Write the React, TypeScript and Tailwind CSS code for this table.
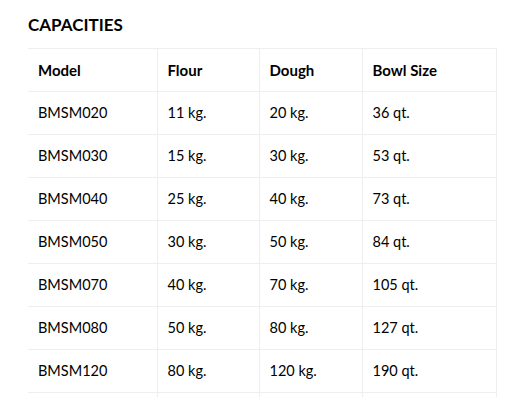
const rows = [
  ['BMSM020', '11 kg.', '20 kg.', '36 qt.'],
  ['BMSM030', '15 kg.', '30 kg.', '53 qt.'],
  ['BMSM040', '25 kg.', '40 kg.', '73 qt.'],
  ['BMSM050', '30 kg.', '50 kg.', '84 qt.'],
  ['BMSM070', '40 kg.', '70 kg.', '105 qt.'],
  ['BMSM080', '50 kg.', '80 kg.', '127 qt.'],
  ['BMSM120', '80 kg.', '120 kg.', '190 qt.'],
];

const widths = ['w-[129px]', 'w-[102px]', 'w-[103px]', 'w-[134px]'];

export default function App() {
  return (
    <div className="min-h-[420px] bg-white pl-[28px] pt-[14px] text-black font-['Lato','Liberation_Sans',sans-serif]">
      <h2 className="text-[17px] font-bold leading-[22px]">CAPACITIES</h2>
      <table className="mt-[12px] border-collapse text-[14.5px]">
        <thead>
          <tr className="h-[43px]">
            {['Model', 'Flour', 'Dough', 'Bowl Size'].map((h, i) => (
              <th
                key={h}
                className={`${widths[i]} border-y border-r border-[#eeeeee] pl-[10px] text-left align-middle text-[15px] font-bold`}
              >
                {h}
              </th>
            ))}
          </tr>
        </thead>
        <tbody>
          {rows.map(r => (
            <tr key={r[0]} className="h-[43px]">
              {r.map((c, i) => (
                <td key={i} className="border-y border-r border-[#eeeeee] pl-[10px] align-middle">
                  {c}
                </td>
              ))}
            </tr>
          ))}
          <tr className="h-[4px]">
            {widths.map((w, i) => (
              <td key={i} className="border-r border-[#eeeeee] p-0" />
            ))}
          </tr>
        </tbody>
      </table>
    </div>
  );
}
